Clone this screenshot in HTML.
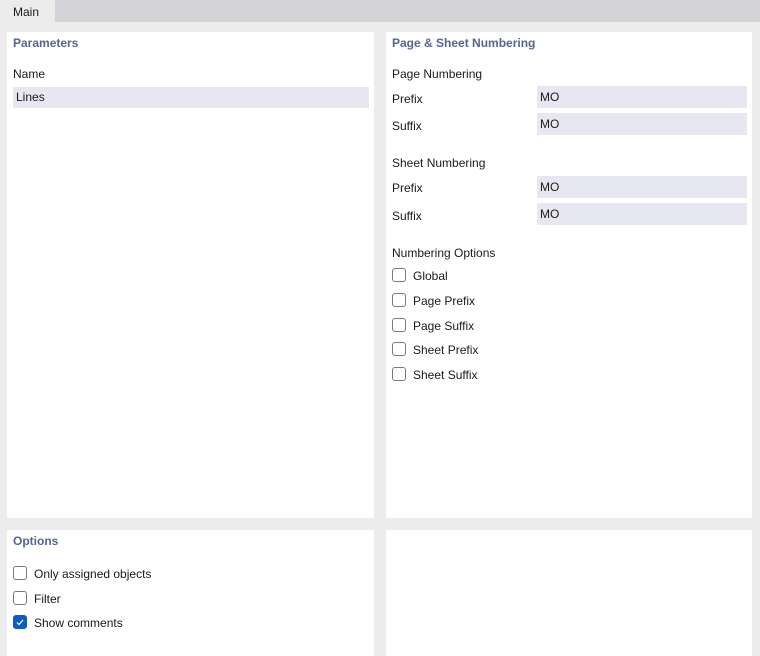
<!DOCTYPE html>
<html><head><style>
*{margin:0;padding:0;box-sizing:border-box}
body{width:760px;height:656px;background:#ececec;position:relative;overflow:hidden;font-family:"Liberation Sans",sans-serif;font-size:12px;color:#1a1a1a}
.a{position:absolute}
.p{position:absolute;background:#fff}
.h{position:absolute;font-weight:bold;color:#56658f;font-size:12px}
.t{position:absolute;line-height:14px}
.f{position:absolute;background:#e7e7f1;height:22px;line-height:22px;padding-left:3px}
.c{position:absolute;width:14px;height:14px;border:1px solid #7a7a7a;border-radius:3px;background:#fff}
.ck{background:#0f5cbf;border-color:#0f5cbf}
</style></head><body>
<div class="a" style="left:0;top:0;width:760px;height:22px;background:#d3d3d8"></div>
<div class="a" style="left:0;top:0;width:55px;height:22px;background:#ececec"></div>
<div class="t" style="left:13px;top:5px">Main</div>

<div class="p" style="left:7px;top:32px;width:367px;height:486px"></div>
<div class="p" style="left:386px;top:32px;width:366px;height:486px"></div>
<div class="p" style="left:7px;top:530px;width:367px;height:126px"></div>
<div class="p" style="left:386px;top:530px;width:366px;height:126px"></div>

<div class="h" style="left:13px;top:36px">Parameters</div>
<div class="t" style="left:13px;top:67px">Name</div>
<div class="f" style="left:13px;top:87px;width:356px;height:21px;line-height:21px">Lines</div>

<div class="h" style="left:392px;top:36px">Page &amp; Sheet Numbering</div>
<div class="t" style="left:392px;top:67px">Page Numbering</div>
<div class="t" style="left:392px;top:92px">Prefix</div>
<div class="f" style="left:537px;top:86px;width:210px">MO</div>
<div class="t" style="left:392px;top:119px">Suffix</div>
<div class="f" style="left:537px;top:113px;width:210px">MO</div>
<div class="t" style="left:392px;top:156px">Sheet Numbering</div>
<div class="t" style="left:392px;top:181px">Prefix</div>
<div class="f" style="left:537px;top:176px;width:210px">MO</div>
<div class="t" style="left:392px;top:209px">Suffix</div>
<div class="f" style="left:537px;top:203px;width:210px">MO</div>
<div class="t" style="left:392px;top:246px">Numbering Options</div>

<div class="c" style="left:392px;top:268px"></div><div class="t" style="left:413px;top:269px">Global</div>
<div class="c" style="left:392px;top:293px"></div><div class="t" style="left:413px;top:294px">Page Prefix</div>
<div class="c" style="left:392px;top:318px"></div><div class="t" style="left:413px;top:319px">Page Suffix</div>
<div class="c" style="left:392px;top:342px"></div><div class="t" style="left:413px;top:343px">Sheet Prefix</div>
<div class="c" style="left:392px;top:367px"></div><div class="t" style="left:413px;top:368px">Sheet Suffix</div>

<div class="h" style="left:13px;top:534px">Options</div>
<div class="c" style="left:13px;top:566px"></div><div class="t" style="left:34px;top:567px">Only assigned objects</div>
<div class="c" style="left:13px;top:591px"></div><div class="t" style="left:34px;top:592px">Filter</div>
<div class="c ck" style="left:13px;top:615px"><svg width="12" height="12" style="position:absolute;left:0;top:0"><path d="M3 6.5 L5 8.5 L9 4" stroke="#fff" stroke-width="1.2" fill="none"/></svg></div><div class="t" style="left:34px;top:616px">Show comments</div>
</body></html>
